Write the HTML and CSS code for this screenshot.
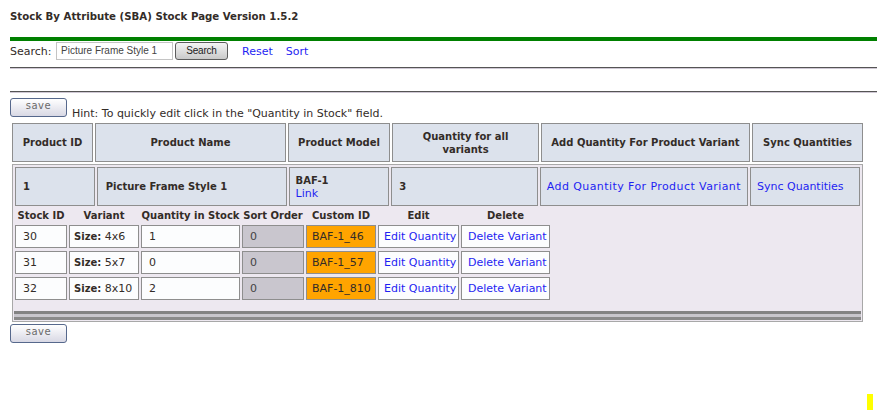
FILE: index.html
```html
<!DOCTYPE html>
<html>
<head>
<meta charset="utf-8">
<link rel="stylesheet" href="styles.css">
</head>
<body>
<div class="page">
  <div class="title">Stock By Attribute (SBA) Stock Page Version 1.5.2</div>
  <div class="greenbar"></div>
  <div class="searchrow">
    <span class="label">Search:</span>
    <span class="input">Picture Frame Style 1</span>
    <span class="sbtn">Search</span>
    <a class="link reset">Reset</a>
    <a class="link sort">Sort</a>
  </div>
  <div class="rule r1"></div>
  <div class="rule r2"></div>
  <div class="saverow">
    <span class="savebtn">save</span>
    <span class="hint">Hint: To quickly edit click in the "Quantity in Stock" field.</span>
  </div>
  <table class="outer">
    <tr class="hdr">
      <th class="c1">Product ID</th>
      <th class="c2">Product Name</th>
      <th class="c3">Product Model</th>
      <th class="c4">Quantity for all<br>variants</th>
      <th class="c5">Add Quantity For Product Variant</th>
      <th class="c6">Sync Quantities</th>
    </tr>
    <tr>
      <td class="wrap" colspan="6">
        <table class="prod">
          <tr>
            <td class="p1 b">1</td>
            <td class="p2 b">Picture Frame Style 1</td>
            <td class="p3"><span class="b">BAF-1</span><br><a class="link">Link</a></td>
            <td class="p4 b">3</td>
            <td class="p5"><a class="link wide">Add Quantity For Product Variant</a></td>
            <td class="p6"><a class="link">Sync Quantities</a></td>
          </tr>
        </table>
        <table class="stock">
          <tr class="shdr">
            <th class="s1">Stock ID</th>
            <th class="s2">Variant</th>
            <th class="s3">Quantity in Stock</th>
            <th class="s4">Sort Order</th>
            <th class="s5">Custom ID</th>
            <th class="s6">Edit</th>
            <th class="s7">Delete</th>
          </tr>
          <tr>
            <td class="t1">30</td>
            <td class="t2"><b>Size:</b> 4x6</td>
            <td class="t3">1</td>
            <td class="t4">0</td>
            <td class="t5">BAF-1_46</td>
            <td class="t6"><a class="link">Edit Quantity</a></td>
            <td class="t7"><a class="link">Delete Variant</a></td>
          </tr>
          <tr>
            <td class="t1">31</td>
            <td class="t2"><b>Size:</b> 5x7</td>
            <td class="t3">0</td>
            <td class="t4">0</td>
            <td class="t5">BAF-1_57</td>
            <td class="t6"><a class="link">Edit Quantity</a></td>
            <td class="t7"><a class="link">Delete Variant</a></td>
          </tr>
          <tr>
            <td class="t1">32</td>
            <td class="t2"><b>Size:</b> 8x10</td>
            <td class="t3">2</td>
            <td class="t4">0</td>
            <td class="t5">BAF-1_810</td>
            <td class="t6"><a class="link">Edit Quantity</a></td>
            <td class="t7"><a class="link">Delete Variant</a></td>
          </tr>
        </table>
        <div class="bars"></div>
      </td>
    </tr>
  </table>
  <div class="saverow2"><span class="savebtn">save</span></div>
  <div class="yellow-row"><span class="yellow"></span></div>
</div>
</body>
</html>
```

FILE: styles.css
```css
* { box-sizing: border-box; }
html, body { margin: 0; padding: 0; background: #fff; }
body {
  font-family: "DejaVu Sans", Verdana, sans-serif;
  font-size: 11px;
  color: #332c28;
  overflow: hidden;
}
b, .b { font-weight: bold; font-size: 10px; }
.page { padding-left: 10px; width: 877px; height: 411px; overflow: hidden; }
.title { padding-top: 11px; line-height: 12px; font-weight: bold; font-size: 10.2px; }
.greenbar { margin-top: 14px; height: 4px; background: #008000; }
.searchrow {
  margin-top: 1px;
  height: 18px;
  display: flex;
  align-items: center;
}
.label { width: 46px; }
.input {
  width: 117px; height: 18px;
  border: 1px solid #c4c4c4;
  background: #fff;
  font-family: "Liberation Sans", Arial, sans-serif;
  font-size: 10px;
  letter-spacing: 0;
  line-height: 16px;
  padding-left: 4px;
  color: #444;
  white-space: nowrap;
}
.sbtn {
  margin-left: 2px;
  width: 53px; height: 18px;
  border: 1px solid #5c5c5c;
  border-radius: 3px;
  background: linear-gradient(#f4f4f4, #c9c9c9);
  font-family: "Liberation Sans", Arial, sans-serif;
  font-size: 10px;
  letter-spacing: -0.2px;
  line-height: 16px;
  text-align: center;
  color: #222;
}
.link { color: #1f1ff2; text-decoration: none; font-size: 11px; }
.wide { letter-spacing: 0.42px; }
.reset { margin-left: 14px; }
.sort { margin-left: 13px; }
.rule {
  height: 2px;
  border-top: 1px solid #555;
  border-bottom: 1px solid #cfc8d4;
}
.r1 { margin-top: 7px; }
.r2 { margin-top: 22px; }
.saverow {
  margin-top: 5px;
  display: flex;
  align-items: flex-end;
  height: 22px;
}
.savebtn {
  display: block;
  width: 57px; height: 19px;
  border: 1px solid #56688c;
  border-radius: 3px;
  background: linear-gradient(#ffffff, #d8d8e4);
  color: #6a6a6a;
  text-align: center;
  line-height: 13px;
  font-size: 10px;
  letter-spacing: 0.5px;
}
.saverow .savebtn { margin-bottom: 3px; }
.hint { margin-left: 5px; line-height: 13px; font-size: 11px; }
.outer {
  border-collapse: separate;
  border-spacing: 2px;
  margin-top: 1px;
}
.outer th, .outer td { padding: 0; }
.hdr th {
  height: 39px;
  background: #dce2ec;
  border: 1px solid #8e8e8e;
  font-weight: bold;
  font-size: 10px;
  text-align: center;
  vertical-align: middle;
  line-height: 13px;
}
.c1 { width: 81px; }
.c2 { width: 191px; }
.c3 { width: 102px; }
.c4 { width: 147px; }
.c5 { width: 209px; }
.c6 { width: 111px; }
.wrap {
  border: 1px solid #a8a8a8;
  background: #ede8f0;
  vertical-align: top;
}
.prod { border-collapse: separate; border-spacing: 2px; }
.prod td {
  height: 39px;
  background: #dce2ec;
  border: 1px solid #8e8e8e;
  padding: 0 6px;
  vertical-align: middle;
  line-height: 13px;
  white-space: nowrap;
}
.p1 { width: 80px; padding-left: 7px !important; }
.p2 { width: 190px; padding-left: 8px !important; }
.p3 { width: 101px; }
.p4 { width: 147px; padding-left: 7px !important; }
.p5 { width: 208px; }
.p6 { width: 110px; }
.stock {
  border-collapse: separate;
  border-spacing: 2px 3px;
  margin-top: -3px;
  table-layout: fixed;
  width: 539px;
}
.stock th {
  height: 14px;
  font-weight: bold;
  font-size: 10px;
  text-align: center;
  vertical-align: middle;
  padding: 0;
  line-height: 13px;
  white-space: nowrap;
  overflow: visible;
}
.stock td {
  height: 23px;
  background: #fcfdfe;
  border: 1px solid #8e8e8e;
  padding: 0 0 0 5px;
  vertical-align: middle;
  white-space: nowrap;
  overflow: visible;
}
.s1 { width: 52px; }
.s2 { width: 70px; }
.s3 { width: 99px; }
.s4 { width: 62px; }
.s5 { width: 70px; }
.s6 { width: 81px; }
.s7 { width: 89px; }
.t1 { padding-left: 7px !important; }
.t2 { padding-left: 4px !important; }
.t3 { padding-left: 7px !important; }
.t4 { padding-left: 7px !important; background: #c9c6ce !important; color: #444; }
.t5 { background: #ffa400 !important; }
.t7 { padding-left: 6px !important; }
.bars {
  margin: 8px 1px 1px 1px;
  height: 9px;
  border-top: 3px solid #838383;
  border-bottom: 3px solid #8a8a8a;
  background: #c8c6cc;
}
.saverow2 { margin-top: 0; }
.yellow-row { display: flex; justify-content: flex-end; padding-right: 4px; margin-top: 51px; }
.yellow { display: block; width: 6px; height: 16px; background: #ffff00; }
```
